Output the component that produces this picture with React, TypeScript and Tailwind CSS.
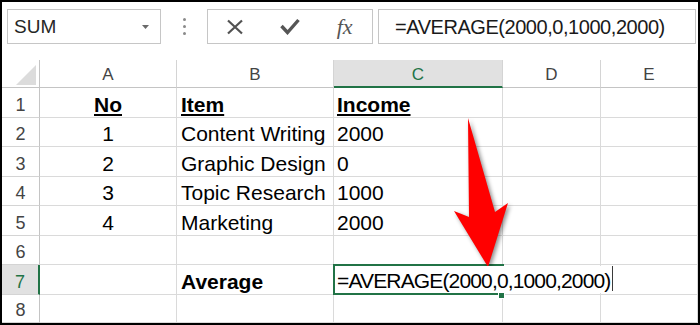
const columns = ["A", "B", "C", "D", "E"]

const rowHeights = [30, 29, 30, 29, 30, 29, 30, 28]

const rows = [
  { no: "No", item: "Item", income: "Income", bold: true },
  { no: "1", item: "Content Writing", income: "2000" },
  { no: "2", item: "Graphic Design", income: "0" },
  { no: "3", item: "Topic Research", income: "1000" },
  { no: "4", item: "Marketing", income: "2000" },
  { no: "", item: "", income: "" },
  { no: "", item: "Average", income: "", bold: true, noUnderline: true },
  { no: "", item: "", income: "" },
]

function Arrow() {
  return (
    <svg
      className="pointer-events-none absolute left-0 top-0"
      width="700"
      height="325"
      viewBox="0 0 700 325"
    >
      <polygon
        points="468,118 495,212 508,203 488,267 454,211 469,217"
        fill="#ff0000"
        style={{ filter: "drop-shadow(2px 2px 2px rgba(0,0,0,0.45))" }}
      />
    </svg>
  )
}

function FormulaBar() {
  return (
    <div className="flex h-[58px] items-start pl-[5px] pr-[2px] pt-[7px]">
      <div className="flex h-[35px] w-[154px] items-center justify-between border border-[#c6c6c6] pl-[6px] pr-[11px]">
        <span className="text-[19px] leading-none text-[#262626]">SUM</span>
        <svg width="7" height="4" viewBox="0 0 7 4">
          <polygon points="0,0 7,0 3.5,4" fill="#6a6a6a" />
        </svg>
      </div>

      <div className="flex h-[35px] w-[46px] flex-col items-center justify-center gap-[4px]">
        <span className="h-[3px] w-[3px] rounded-full bg-[#8a8a8a]" />
        <span className="h-[3px] w-[3px] rounded-full bg-[#8a8a8a]" />
        <span className="h-[3px] w-[3px] rounded-full bg-[#8a8a8a]" />
      </div>

      <div className="grid h-[35px] w-[166px] grid-cols-3 items-center border border-[#c6c6c6]">
        <div className="flex justify-center">
          <svg width="18" height="16" viewBox="0 0 18 16">
            <path d="M2 1.5 L16 14.5 M16 1.5 L2 14.5" stroke="#525252" strokeWidth="2.2" />
          </svg>
        </div>
        <div className="flex justify-center">
          <svg width="20" height="17" viewBox="0 0 20 17">
            <path d="M1.5 8 L7.5 14.5 L18.5 2" stroke="#555555" strokeWidth="3.4" fill="none" />
          </svg>
        </div>
        <div className="flex justify-center">
          <span className="font-['Liberation_Serif',serif] text-[22px] italic leading-none text-[#555555]">
            fx
          </span>
        </div>
      </div>

      <div className="ml-[5px] flex h-[35px] flex-1 items-center border border-[#c6c6c6] pl-[16px]">
        <span className="text-[20px] leading-none tracking-[-0.45px] text-[#1a1a1a]">
          =AVERAGE(2000,0,1000,2000)
        </span>
      </div>
    </div>
  )
}

export default function App() {
  return (
    <div className="relative h-[325px] w-[700px] bg-white font-['Liberation_Sans',Arial,sans-serif]">
      <div className="h-full w-full overflow-hidden border-2 border-black">
        <FormulaBar />

        <div className="grid grid-cols-[38px_137px_157px_169px_98px_97px] grid-rows-[28px_30px_29px_30px_29px_30px_29px_30px_28px]">
          <div className="relative border-b border-r border-[#c4c4c4]">
            <svg className="absolute left-0 top-0" width="38" height="28" viewBox="0 0 38 28">
              <polygon points="34,5 34,25 14,25" fill="#dcdcdc" />
            </svg>
          </div>

          {columns.map((col) =>
            col === "C" ? (
              <div
                key={col}
                className="flex items-center justify-center border-b-2 border-r border-b-[#217346] border-r-[#d4d4d4] bg-[#e1e1e1] pt-[2px] text-[17px] leading-none text-[#217346]"
              >
                {col}
              </div>
            ) : (
              <div
                key={col}
                className="flex items-center justify-center border-b border-r border-b-[#c4c4c4] border-r-[#d4d4d4] pt-[2px] text-[17px] leading-none text-[#444444]"
              >
                {col}
              </div>
            )
          )}

          {rows.map((row, i) => {
            const n = i + 1
            const textClass = row.bold
              ? row.noUnderline
                ? "font-bold"
                : "font-bold underline underline-offset-[2px]"
              : ""

            return [
              <div
                key={`h${n}`}
                className={
                  n === 7
                    ? "flex items-end justify-center border-b border-r-2 border-b-[#d4d4d4] border-r-[#217346] bg-[#e1e1e1] pb-[3px] text-[18px] leading-none text-[#217346]"
                    : "flex items-end justify-center border-b border-r border-b-[#d4d4d4] border-r-[#c4c4c4] pb-[3px] text-[18px] leading-none text-[#444444]"
                }
                style={{ height: rowHeights[i] }}
              >
                {n}
              </div>,

              <div
                key={`a${n}`}
                className="flex items-end justify-center border-b border-r border-[#dadada] pb-[2px] text-[21px] leading-none text-black"
              >
                <span className={textClass}>{row.no}</span>
              </div>,

              <div
                key={`b${n}`}
                className="flex items-end border-b border-r border-[#dadada] pb-[2px] pl-[4px] text-[21px] leading-none text-black"
              >
                <span className={textClass}>{row.item}</span>
              </div>,

              <div
                key={`c${n}`}
                className="relative flex items-end border-b border-r border-[#dadada] pb-[2px] pl-[3px] text-[21px] leading-none text-black"
              >
                <span className={textClass}>{row.income}</span>

                {n === 7 && (
                  <>
                    <div className="absolute -left-[1px] -top-[1px] h-[31px] w-[171px] border-2 border-[#217346]" />
                    <div className="absolute left-[2px] top-[1px] z-10 flex h-[27px] w-[280px] items-end bg-white pb-[2px] pl-[1px]">
                      <span className="text-[21px] leading-none tracking-[-0.85px] text-black">
                        =AVERAGE(2000,0,1000,2000)
                      </span>
                      <span className="ml-[2px] h-[25px] w-px self-center bg-[#3a3a3a]" />
                    </div>
                    <div className="absolute left-[164px] top-[27px] z-20 h-[7px] w-[7px] border border-white bg-[#217346]" />
                  </>
                )}
              </div>,

              <div key={`d${n}`} className="border-b border-r border-[#dadada]" />,

              <div key={`e${n}`} className="border-b border-r border-[#dadada]" />,
            ]
          })}
        </div>
      </div>

      <Arrow />
    </div>
  )
}
